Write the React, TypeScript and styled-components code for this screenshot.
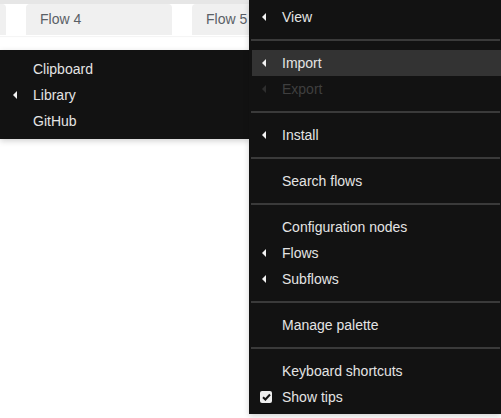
import React from "react";
import styled, { createGlobalStyle } from "styled-components";

const GlobalStyle = createGlobalStyle`
  html, body {
    margin: 0;
    padding: 0;
    background: #fff;
    font-family: "Liberation Sans", Arial, sans-serif;
    overflow: hidden;
  }
`;

const Page = styled.div`
  position: relative;
  width: 501px;
  height: 418px;
  background: #fff;
`;

const TabBar = styled.div`
  display: flex;
  gap: 20px;
  padding-top: 4px;
  background: linear-gradient(#e6e6e6 0, #e6e6e6 4px, #fff 4px);
  height: 32px;
  margin-left: -140px;
  box-shadow: 0 1px 1px rgba(0, 0, 0, 0.04);
`;

const Tab = styled.div`
  flex: none;
  width: 146px;
  height: 31px;
  box-sizing: border-box;
  padding: 7px 0 0 14px;
  background: #f0f0f0;
  border-radius: 4px 4px 0 0;
  color: #5a5f66;
  font-size: 14px;
`;

const Menu = styled.ul<{ $left: number; $top: number; $width: number; $pad: string }>`
  position: absolute;
  left: ${(p) => p.$left}px;
  top: ${(p) => p.$top}px;
  width: ${(p) => p.$width}px;
  margin: 0;
  padding: ${(p) => p.$pad};
  list-style: none;
  background: #121212;
  box-sizing: border-box;
  box-shadow: 0 2px 6px rgba(0, 0, 0, 0.18);
`;

const Item = styled.li<{ $active?: boolean; $disabled?: boolean }>`
  display: flex;
  align-items: center;
  height: 26px;
  margin-left: 3px;
  font-size: 14px;
  color: ${(p) => (p.$disabled ? "#3f3f3f" : "#e4e4e4")};
  background: ${(p) => (p.$active ? "#333333" : "transparent")};
  white-space: nowrap;
`;

const IconSlot = styled.span`
  flex: none;
  width: 30px;
  display: flex;
  align-items: center;
  padding-left: 8px;
  box-sizing: border-box;
`;

const Caret = styled.span<{ $disabled?: boolean }>`
  margin-left: 2px;
  width: 0;
  height: 0;
  border-top: 4px solid transparent;
  border-bottom: 4px solid transparent;
  border-right: 4px solid ${(p) => (p.$disabled ? "#2e2e2e" : "#f2f2f2")};
`;

const Check = styled.span`
  width: 12px;
  height: 12px;
  border-radius: 2px;
  background: #eeeeee;
  display: flex;
  align-items: center;
  justify-content: center;
`;

const Divider = styled.li`
  height: 2px;
  margin: 9px 1px 9px 2px;
  background: #3a3a3a;
`;

type Entry =
  | { kind: "divider" }
  | { kind: "item"; label: string; sub?: boolean; active?: boolean; disabled?: boolean; checked?: boolean };

const mainMenu: Entry[] = [
  { kind: "item", label: "View", sub: true },
  { kind: "divider" },
  { kind: "item", label: "Import", sub: true, active: true },
  { kind: "item", label: "Export", sub: true, disabled: true },
  { kind: "divider" },
  { kind: "item", label: "Install", sub: true },
  { kind: "divider" },
  { kind: "item", label: "Search flows" },
  { kind: "divider" },
  { kind: "item", label: "Configuration nodes" },
  { kind: "item", label: "Flows", sub: true },
  { kind: "item", label: "Subflows", sub: true },
  { kind: "divider" },
  { kind: "item", label: "Manage palette" },
  { kind: "divider" },
  { kind: "item", label: "Keyboard shortcuts" },
  { kind: "item", label: "Show tips", checked: true },
];

const importMenu: Entry[] = [
  { kind: "item", label: "Clipboard" },
  { kind: "item", label: "Library", sub: true },
  { kind: "item", label: "GitHub" },
];

function renderEntries(entries: Entry[]) {
  return entries.map((e, i) => {
    if (e.kind === "divider") return <Divider key={i} />;
    return (
      <Item key={i} $active={e.active} $disabled={e.disabled}>
        <IconSlot>
          {e.sub && <Caret $disabled={e.disabled} />}
          {e.checked && (
            <Check>
              <svg width="9" height="8" viewBox="0 0 9 8">
                <path d="M1 4.2 L3.4 6.5 L8 1.5" fill="none" stroke="#121212" strokeWidth="2" />
              </svg>
            </Check>
          )}
        </IconSlot>
        {e.label}
      </Item>
    );
  });
}

export default function App() {
  return (
    <Page>
      <GlobalStyle />
      <TabBar>
        <Tab />
        <Tab>Flow 4</Tab>
        <Tab>Flow 5</Tab>
      </TabBar>
      <Menu $left={0} $top={50} $width={250} $pad="6px 0 5px">
        {renderEntries(importMenu)}
      </Menu>
      <Menu $left={249} $top={0} $width={252} $pad="4px 0">
        {renderEntries(mainMenu)}
      </Menu>
    </Page>
  );
}
